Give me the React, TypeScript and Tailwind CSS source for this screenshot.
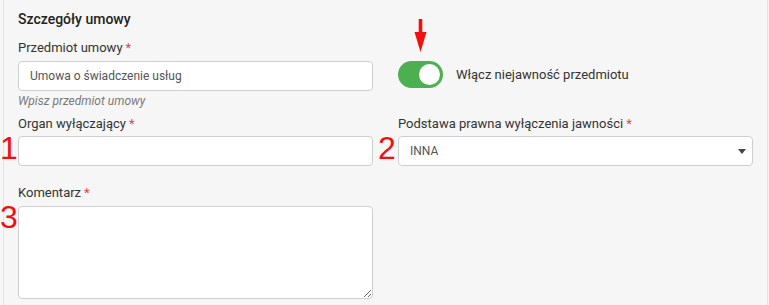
import React, { useState } from "react";

const Req = () => <span className="ml-[3px] text-[#e8414b]">*</span>;

const App = () => {
  const [secret, setSecret] = useState<boolean>(true);

  return (
    <div className="h-[305px] w-[769px] bg-[#f6f6f6] font-['Roboto',sans-serif]">
      <div className="relative ml-[3px] h-full w-[765px] border-x border-[#e4e4e4] px-[14px] pt-[9px] text-[#333]">
        <div className="text-[14px] font-medium leading-[20px] text-[#222]">Szczegóły umowy</div>

        <div className="mt-[10px] grid grid-cols-2 gap-x-[25px]">
          <div className="flex flex-col">
            <label className="text-[13px] leading-[18px]">
              Przedmiot umowy
              <Req />
            </label>
            <input
              defaultValue="Umowa o świadczenie usług"
              className="mt-[4px] h-[30px] rounded-[4px] border border-[#cfcfcf] bg-white px-[11px] text-[12px] text-[#555] outline-none"
            />
            <div className="mt-[2px] text-[12px] italic leading-[16px] text-[#7a7a7a]">Wpisz przedmiot umowy</div>
          </div>

          <div className="relative flex flex-col">
            <div className="mt-[22px] flex items-center gap-[13px]">
              <div
                className={`flex h-[27px] w-[45px] cursor-pointer items-center rounded-full p-[3px] ${
                  secret ? "justify-end bg-[#4caf50]" : "justify-start bg-[#ccc]"
                }`}
                onClick={() => setSecret((p) => !p)}
              >
                <div className="h-[21px] w-[21px] rounded-full bg-white" />
              </div>
              <span className="text-[13px]">Włącz niejawność przedmiotu</span>
            </div>
            {/* red annotation arrow */}
            <svg className="absolute left-[16px] top-[-20px]" width="13" height="33" viewBox="0 0 13 33">
              <rect x="4.7" y="0" width="3.6" height="15" fill="#f01010" />
              <polygon points="0.5,13 12.5,13 6.5,33" fill="#f01010" />
            </svg>
          </div>

          <div className="mt-[6px] flex flex-col">
            <label className="text-[13px] leading-[18px]">
              Organ wyłączający
              <Req />
            </label>
            <input className="mt-[3px] h-[30px] rounded-[4px] border border-[#cfcfcf] bg-white px-[11px] text-[12px] outline-none" />
          </div>

          <div className="mt-[6px] flex flex-col">
            <label className="text-[13px] leading-[18px]">
              Podstawa prawna wyłączenia jawności
              <Req />
            </label>
            <div className="mt-[3px] flex h-[30px] items-center justify-between rounded-[4px] border border-[#cfcfcf] bg-white pl-[11px] pr-[6px] text-[12px] text-[#555]">
              <span>INNA</span>
              <svg width="8" height="5" viewBox="0 0 8 5">
                <polygon points="0,0 8,0 4,5" fill="#444" />
              </svg>
            </div>
          </div>

          <div className="mt-[18px] flex flex-col">
            <label className="text-[13px] leading-[18px]">
              Komentarz
              <Req />
            </label>
            <textarea className="mt-[4px] h-[93px] rounded-[4px] border border-[#cfcfcf] bg-white p-[6px] text-[12px] outline-none" />
          </div>
        </div>

        {/* red annotation numbers */}
        <span className="absolute left-[-4px] top-[128px] font-['Liberation_Sans',sans-serif] text-[32px] leading-[40px] text-[#f01010]">1</span>
        <span className="absolute left-[374px] top-[128px] font-['Liberation_Sans',sans-serif] text-[32px] leading-[40px] text-[#f01010]">2</span>
        <span className="absolute left-[-4px] top-[197px] font-['Liberation_Sans',sans-serif] text-[32px] leading-[40px] text-[#f01010]">3</span>
      </div>
    </div>
  );
};

export default App;
